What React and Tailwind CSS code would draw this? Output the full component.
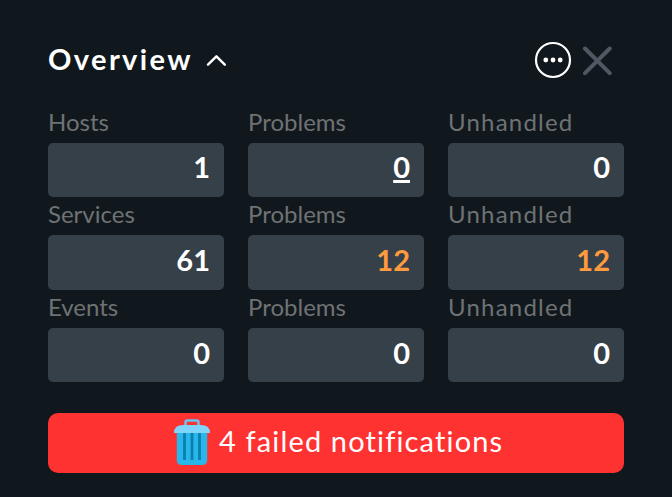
const rows = [
  { label: "Hosts", cells: ["1", "0", "0"] },
  { label: "Services", cells: ["61", "12", "12"] },
  { label: "Events", cells: ["0", "0", "0"] },
];

function Cell({ label, labelClass, value, underlined }) {
  return (
    <div>
      <div className={`h-[38.1px] text-[24px] leading-[34px] text-[#6f7273] ${labelClass}`}>{label}</div>
      <div
        className={`flex h-[54.5px] items-center justify-end rounded-[5px] bg-[#364049] pb-[6.1px] pr-[14px] text-[29px] font-bold leading-none ${value === "12" ? "text-[#ff9b3e]" : "text-white"}`}
      >
        <span className={underlined ? "underline decoration-[3px] underline-offset-[2px]" : ""}>{value}</span>
      </div>
    </div>
  );
}

export default function App() {
  return (
    <main className="h-[497px] w-[672px] overflow-hidden bg-[#10181e] px-12 font-['Lato',sans-serif]">
      <header className="flex h-[104.6px] items-center pt-[15.4px]">
        <h1 className="pb-[3px] text-[29px] font-bold leading-none tracking-[2.38px] text-white">Overview</h1>
        <svg className="ml-[13px] mt-px" width="22" height="14" viewBox="0 0 22 14" fill="none" stroke="#fff" strokeWidth="2.4" strokeLinecap="round" strokeLinejoin="round">
          <path d="M2 11.700l8.400-8.400 8.400 8.400" />
        </svg>
        <svg className="ml-auto" width="38" height="38" viewBox="0 0 38 38" fill="none">
          <circle cx="19" cy="19" r="17" stroke="#fff" strokeWidth="2.2" />
          <g fill="#fff">
            <circle cx="11.8" cy="19" r="2.4" />
            <circle cx="19" cy="19" r="2.4" />
            <circle cx="26.2" cy="19" r="2.4" />
          </g>
        </svg>
        <svg className="ml-[10px] mr-[11px] mt-[3px]" width="31" height="30" viewBox="0 0 31 30" fill="none" stroke="#505963" strokeWidth="4" strokeLinecap="round">
          <path d="M3 2.500l24.700 24.700M27.700 2.500L3 27.200" />
        </svg>
      </header>
      <section className="grid grid-cols-3 gap-x-6">
        {rows.map((row, r) =>
          row.cells.map((value, c) => (
            <Cell
              key={`${r}-${c}`}
              value={value}
              label={c === 0 ? row.label : c === 1 ? "Problems" : "Unhandled"}
              labelClass={c === 2 ? "tracking-[1.2px]" : ""}
              underlined={r === 0 && c === 1}
            />
          ))
        )}
      </section>
      <div className="mt-[30.6px] flex h-[60px] items-center rounded-[10px] bg-[#ff3232] pl-[126px] text-[29px] tracking-[1.15px] text-white">
        <svg width="36" height="48" viewBox="0 0 36 48">
          <path d="M11.500 7V3.500q0-2 2-2h9q2 0 2 2v3.500" fill="none" stroke="#68c5f5" strokeWidth="2.500" />
          <path d="M2.800 13h30.400v28q0 5-5 5h-20.400q-5 0-5-5z" fill="#29b6ea" />
          <path d="M0 14q0-8 9-8h18q9 0 9 8z" fill="#81d4fa" />
          <path d="M10.500 14v27M18 14v27M25.500 14v27" stroke="#0a80ae" strokeWidth="2.800" />
        </svg>
        <span className="ml-[9px] pb-1">4 failed notifications</span>
      </div>
    </main>
  );
}
